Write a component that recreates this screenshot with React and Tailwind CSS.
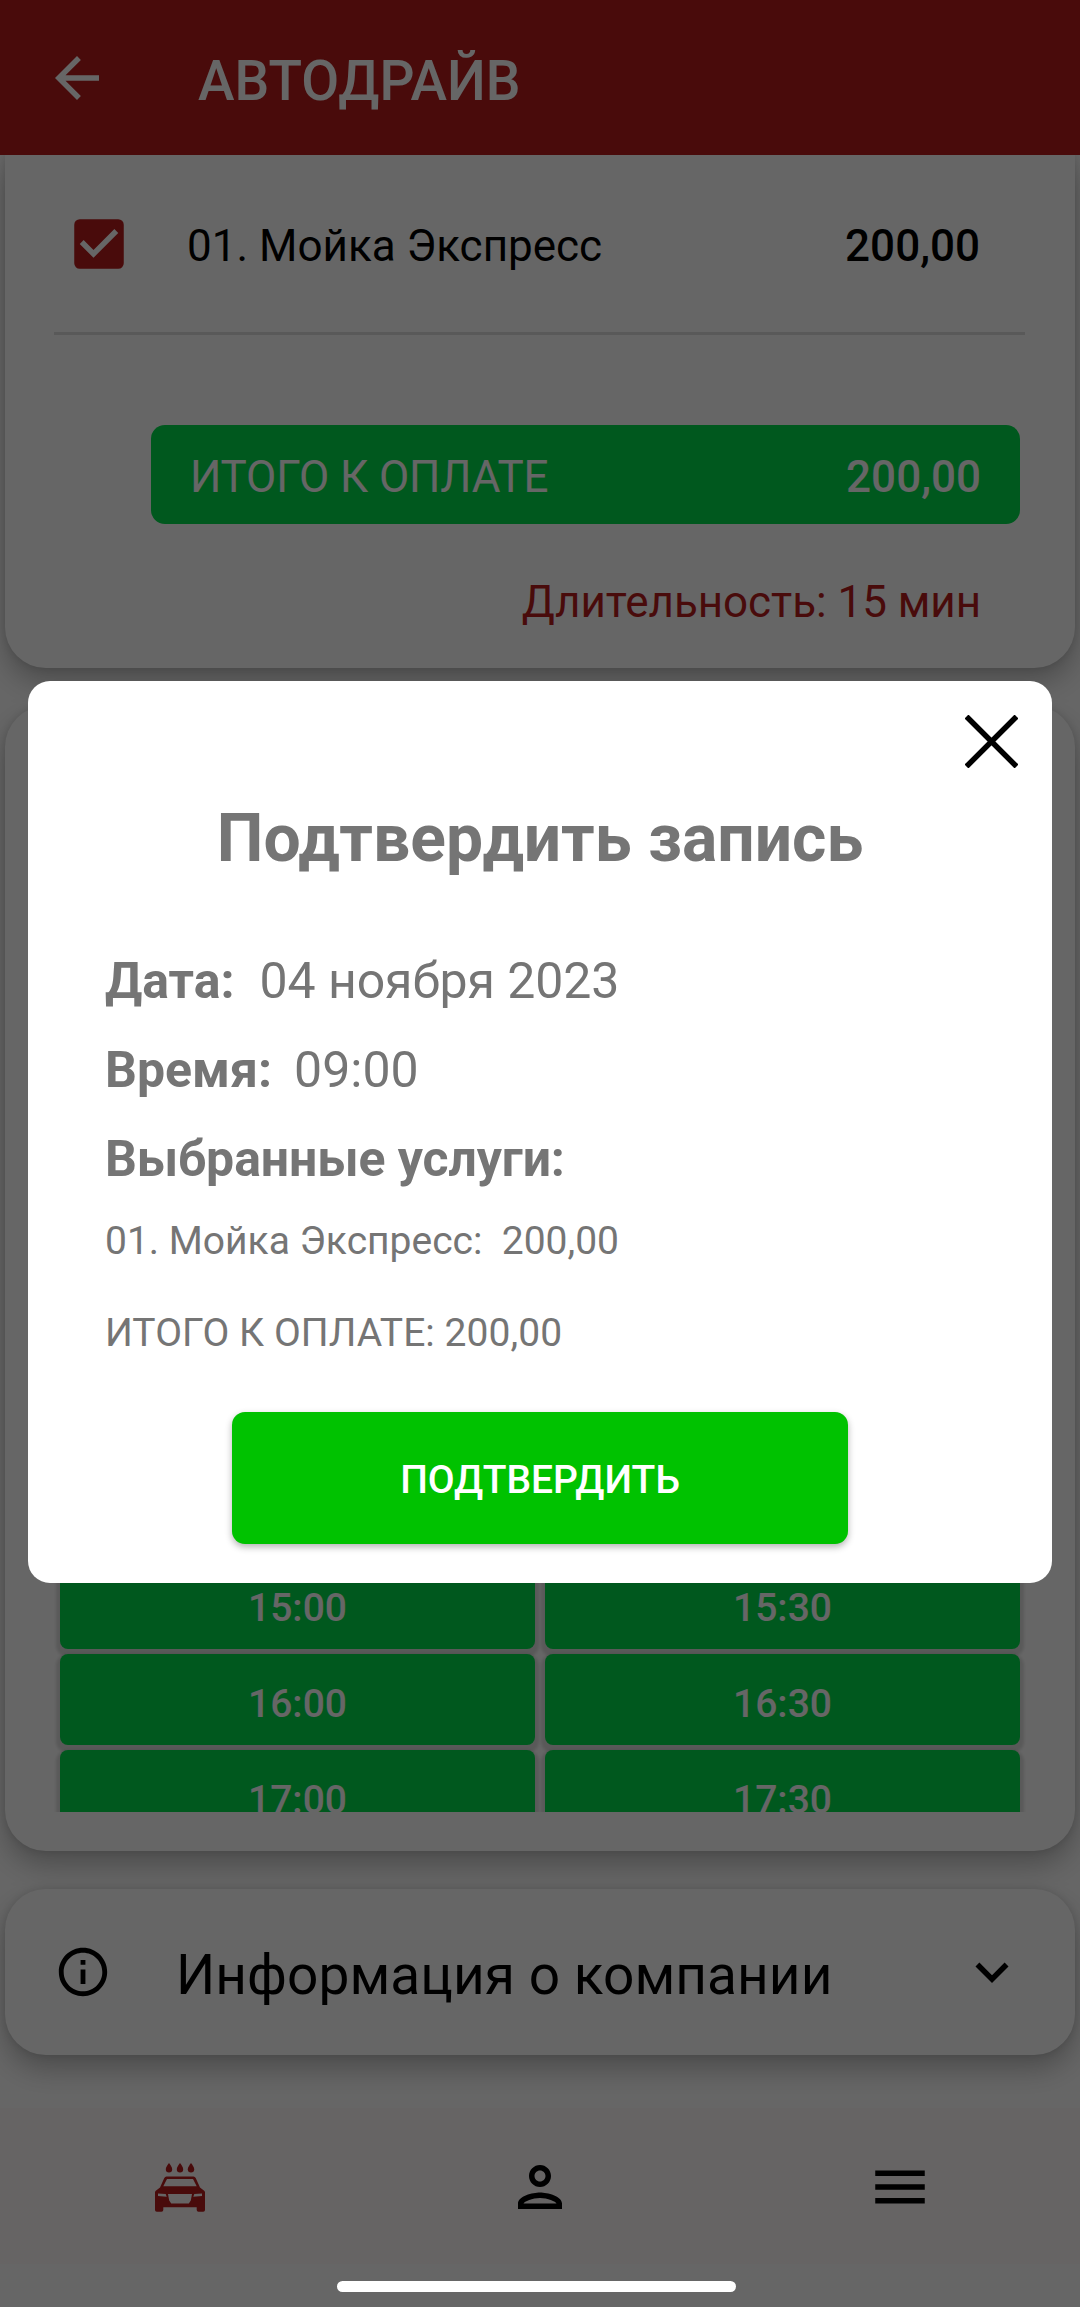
import React, { useState } from "react";
import {
  MdArrowBack,
  MdCheckBox,
  MdKeyboardArrowDown,
  MdMenu,
  MdOutlineInfo,
  MdOutlinePerson,
} from "react-icons/md";

const services = [{ id: 1, title: "01. Мойка Экспресс", price: "200,00" }];

const slots = ["15:00", "15:30", "16:00", "16:30", "17:00", "17:30"];

function CarWashIcon() {
  return (
    <svg width="50" height="49" viewBox="0 0 50 49" fill="currentColor">
      {/* drops */}
      <path d="M14 0c1.9 2.6 3.2 4.4 3.2 6.200a3.200 3.200 0 0 1-6.400 0c0-1.800 1.300-3.600 3.200-6.200z" />
      <path d="M25 0c1.900 2.600 3.200 4.400 3.200 6.200a3.200 3.200 0 0 1-6.400 0c0-1.800 1.300-3.600 3.200-6.200z" />
      <path d="M36 0c1.900 2.600 3.200 4.400 3.200 6.200a3.200 3.200 0 0 1-6.400 0c0-1.800 1.300-3.600 3.200-6.200z" />
      {/* body */}
      <path
        fillRule="evenodd"
        d="M11.500 13.500H38.500Q40 13.500 40.700 15L45 24.500L49.200 27.800Q50 28.400 50 29.500V47Q50 48.800 48.200 48.800H43.500Q41.700 48.800 41.700 47V44.200H8.300V47Q8.300 48.800 6.500 48.800H1.800Q0 48.800 0 47V29.500Q0 28.400 .8 27.800L5 24.500L9.300 15Q10 13.500 11.500 13.500ZM12 16L8.300 23.300H41.700L38 16ZM3 30.500V33L11.700 33.800L10.700 31ZM47 30.500V33L38.300 33.800L39.300 31ZM13 31L14.200 37.500L16.200 40.500H33.800L35.800 37.500L37 31Z"
      />
    </svg>
  );
}

function Card({ className, children }) {
  return (
    <section
      className={`mx-[5px] shrink-0 bg-white shadow-[0_14px_28px_rgba(0,0,0,0.26),0_0_8px_rgba(0,0,0,0.12)] ${className}`}
    >
      {children}
    </section>
  );
}

function SlotButton({ label }) {
  return (
    <button className="h-[91px] rounded-[8px] bg-[#00dc4b] pt-[10px] text-[39px] font-medium leading-none text-white shadow-[0_4px_3px_4px_rgba(0,0,0,0.13)]">
      {label}
    </button>
  );
}

function ConfirmDialog({ onClose }) {
  return (
    <div className="absolute inset-0 flex items-center justify-center bg-black/60 pb-[43px]">
      <div className="relative flex h-[902px] w-[1024px] flex-col rounded-[22px] bg-white px-[77px] text-[#757575]">
        <button className="absolute right-[34px] top-[34px]" onClick={onClose} aria-label="Закрыть">
          <svg width="53" height="53" viewBox="0 0 53 53" fill="none" stroke="black" strokeWidth="5.5">
            <path d="M1.5 1.5l50 50M51.5 1.5l-50 50" />
          </svg>
        </button>

        <h2 className="mt-[118px] text-center text-[66px] font-bold leading-[80px]">
          Подтвердить запись
        </h2>

        <div className="mt-[58px] text-[50px] leading-[89px]">
          <p><b>Дата:</b><span className="ml-[25px] tracking-[-0.1px]">04 ноября 2023</span></p>
          <p><b>Время:</b><span className="ml-[22px]">09:00</span></p>
          <p><b className="tracking-[-0.1px]">Выбранные услуги:</b></p>
        </div>

        <div className="mt-[10px] text-[39px] leading-[54px]">
          {services.map((s) => (
            <p key={s.id} className="whitespace-pre">{s.title}:  {s.price}</p>
          ))}
          <p className="mt-[38px] tracking-[0.06px]">ИТОГО К ОПЛАТЕ: 200,00</p>
        </div>

        <button
          onClick={onClose}
          className="mx-auto mt-[52px] h-[132px] w-[616px] rounded-[13px] bg-[#00c200] pt-[5px] text-[39px] font-medium leading-none text-white shadow-[0_3px_7px_rgba(0,0,0,0.3)]"
        >
          ПОДТВЕРДИТЬ
        </button>
      </div>
    </div>
  );
}

export default function App() {
  const [open, setOpen] = useState(true);

  return (
    <div className="relative flex h-[2307px] w-[1080px] flex-col overflow-hidden bg-white font-['Roboto',sans-serif] text-black">
      <header className="flex h-[155px] shrink-0 items-center bg-[#b71c1c] pl-[44px] text-white">
        <MdArrowBack size={66} />
        <h1 className="ml-[88px] mt-[7px] text-[55px] font-medium leading-none">АВТОДРАЙВ</h1>
      </header>

      <main className="flex h-[1953px] shrink-0 flex-col overflow-hidden">
        {/* Services */}
        <Card className="h-[513px] rounded-b-[41px] pl-[49px] pr-[50px]">
          {services.map((s) => (
            <div key={s.id} className="flex h-[180px] items-center border-b-3 border-[#dedede] pl-[12px] pr-[45px]">
              <MdCheckBox size={66} className="text-[#b71c1c]" />
              <span className="ml-[55px] mt-[5px] text-[44px]">{s.title}</span>
              <span className="ml-auto mt-[5px] text-[44px] font-medium">{s.price}</span>
            </div>
          ))}
          <div className="ml-[97px] mr-[5px] mt-[90px] flex h-[99px] items-center justify-between rounded-[14px] bg-[#00dc4b] pl-[39px] pr-[39px] pt-[5px] text-[44px] text-white">
            <span className="tracking-[-0.15px]">ИТОГО К ОПЛАТЕ</span>
            <span className="font-medium">200,00</span>
          </div>
          <p className="mt-[45px] pr-[44px] text-right text-[44px] leading-[66px] tracking-[-0.05px] text-[#b71c1c]">
            Длительность: 15 мин
          </p>
        </Card>

        {/* Time slots */}
        <Card className="mt-[38px] flex h-[1145px] flex-col justify-end rounded-[41px] px-[49px] pb-[39px]">
          <div className="h-[254px] overflow-hidden px-[6px]">
            <div className="grid grid-cols-2 gap-x-[10px] gap-y-[5px]">
              {slots.map((t) => (
                <SlotButton key={t} label={t} />
              ))}
            </div>
          </div>
        </Card>

        {/* Company info */}
        <Card className="mt-[38px] flex h-[166px] items-center rounded-[41px] pl-[49px] pr-[50px]">
          <MdOutlineInfo size={58} />
          <span className="ml-[64px] mt-[7px] text-[55px] tracking-[0.06px]">Информация о компании</span>
          <MdKeyboardArrowDown size={66} className="ml-auto" />
        </Card>
      </main>

      <nav className="grid h-[156px] shrink-0 grid-cols-3 place-items-center bg-[#fffafb] pt-[2px]">
        <span className="text-[#b71c1c]"><CarWashIcon /></span>
        <MdOutlinePerson size={66} />
        <MdMenu size={66} />
      </nav>
      <div className="h-[43px] shrink-0 bg-white" />

      {open && <ConfirmDialog onClose={() => setOpen(false)} />}

      {/* System gesture bar */}
      <div className="absolute bottom-[15px] left-[337px] h-[11px] w-[399px] rounded-full bg-white" />
    </div>
  );
}
